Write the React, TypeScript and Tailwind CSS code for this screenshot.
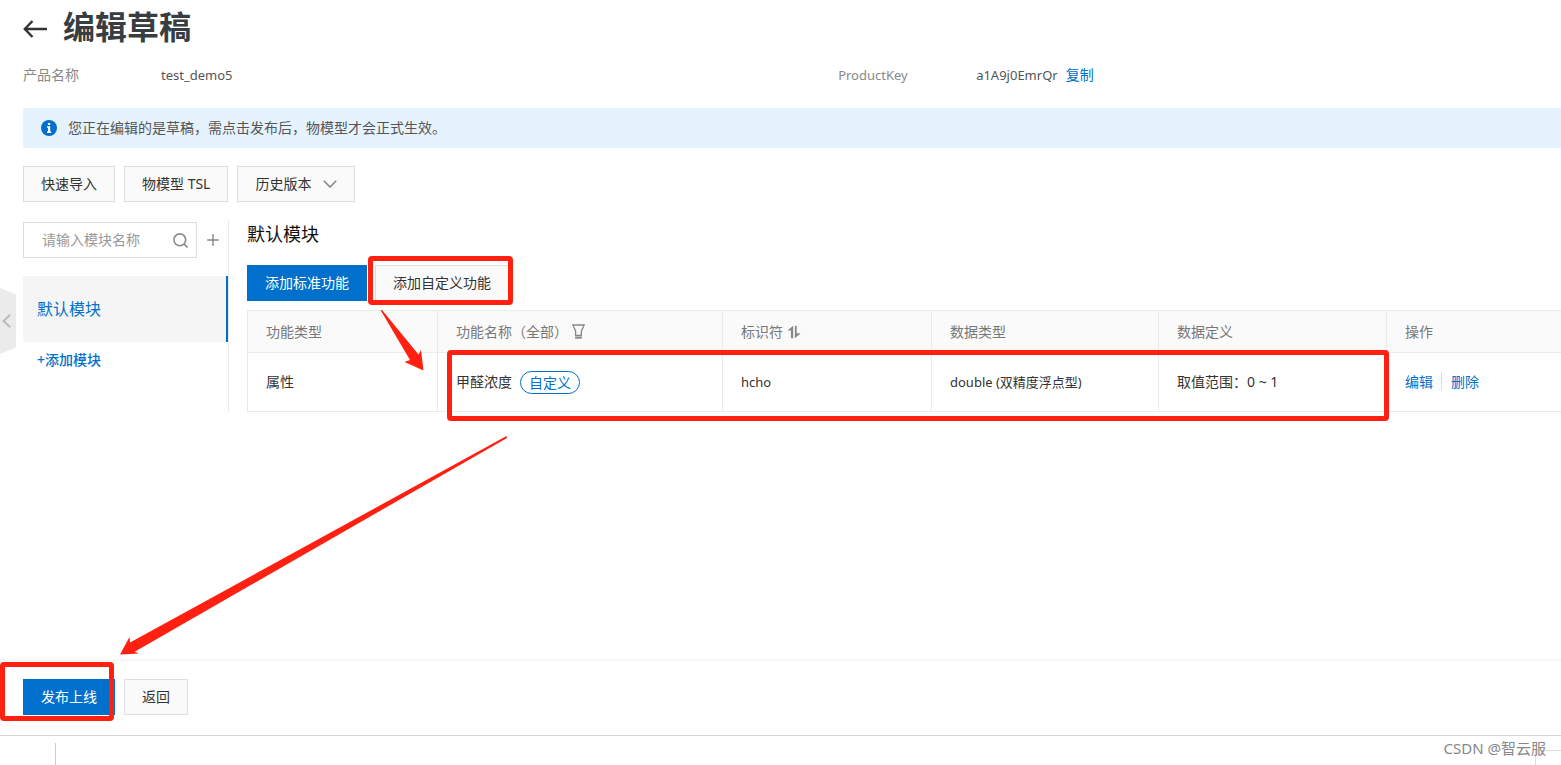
import { Plus } from "lucide-react";

const COLUMNS = [
  { label: "功能类型", width: "w-[190px]" },
  { label: "功能名称（全部）", width: "w-[285px]", icon: "filter" },
  { label: "标识符", width: "w-[209px]", icon: "sort" },
  { label: "数据类型", width: "w-[227px]" },
  { label: "数据定义", width: "w-[228px]" },
  { label: "操作", width: "" },
];

const ROWS = [
  {
    type: "属性",
    name: "甲醛浓度",
    tag: "自定义",
    identifier: "hcho",
    dataType: "double (双精度浮点型)",
    definition: "取值范围：0 ~ 1",
  },
];

const BTN = "h-9 border border-[#dedede] bg-[#fafafa] px-[17px] text-[#333]";
const BTN_PRIMARY = "h-9 bg-[#0070cc] px-[18px] text-white";
const CELL = "border border-[#ebebeb] px-[18px] text-left font-normal last:border-r-0";

function BackIcon() {
  return (
    <svg className="h-[18px] w-6" viewBox="0 0 24 18" fill="none" stroke="#333" strokeWidth="2.4" aria-hidden="true">
      <path d="M9.500 1L1.800 9l7.700 8M2 9h22" />
    </svg>
  );
}

function InfoIcon() {
  return (
    <svg className="size-4" viewBox="0 0 16 16" aria-hidden="true">
      <circle cx="8" cy="8" r="8" fill="#0070cc" />
      <path d="M6.900 3h2.300v2H6.900zM6 6.300h3.200v5.200h1V13H6v-1.500h1V7.800H6z" fill="#fff" />
    </svg>
  );
}

function ChevronIcon() {
  return (
    <svg className="h-2 w-[14px]" viewBox="0 0 14 8" fill="none" stroke="#888" strokeWidth="1.6" aria-hidden="true">
      <path d="M.8.8L7 7l6.200-6.200" />
    </svg>
  );
}

function SearchIcon() {
  return (
    <svg className="size-[15px] shrink-0" viewBox="0 0 15 15" fill="none" stroke="#888" strokeWidth="1.6" aria-hidden="true">
      <circle cx="6.800" cy="6.800" r="5.900" />
      <path d="M11 11l3.500 3.500" />
    </svg>
  );
}

function FilterIcon() {
  return (
    <svg className="h-[15px] w-[13px]" viewBox="0 0 13 15" fill="none" stroke="#888" aria-hidden="true">
      <path d="M.8 1h11.400L9.400 7v4.500H3.600V7z" strokeWidth="1.300" />
      <path d="M3.200 13.700h6.600" strokeWidth="2" />
    </svg>
  );
}

function SortIcon() {
  return (
    <svg className="h-[14px] w-[14px]" viewBox="0 0 14 14" fill="#888" aria-hidden="true">
      <path d="M6.200.8v12.400H3.900V5.400H.4zM7.900.8h1.800v7.400h3.900L7.900 13.200z" />
    </svg>
  );
}

export default function App() {
  return (
    <div className="relative flex min-h-screen flex-col overflow-hidden bg-white font-['Noto_Sans','Noto_Sans_CJK_SC',sans-serif] text-sm text-[#333]">
      <main className="flex-1 pl-[23px]">
        <header className="flex h-[54px] items-center gap-4">
          <a href="#back" aria-label="返回上一页" className="pt-1">
            <BackIcon />
          </a>
          <h1 className="text-[32px] leading-[54px] font-bold text-[#373d41]">编辑草稿</h1>
        </header>

        <dl className="grid grid-cols-[53%_47%] pt-[11px] leading-5">
          <div className="flex">
            <dt className="w-[138px] text-[#888]">产品名称</dt>
            <dd className="text-[13px] text-[#555]">test_demo5</dd>
          </div>
          <div className="flex">
            <dt className="w-[138px] text-[13px] text-[#888]">ProductKey</dt>
            <dd className="flex gap-2 text-[13px] text-[#555]">
              a1A9j0EmrQr
              <button className="text-sm text-[#0070cc]">复制</button>
            </dd>
          </div>
        </dl>

        <div className="mt-[23px] flex h-10 items-center gap-[11px] bg-[#e5f3ff] pl-[18px] text-[#555]">
          <InfoIcon />
          <p>您正在编辑的是草稿，需点击发布后，物模型才会正式生效。</p>
        </div>

        <div className="mt-[18px] flex gap-[9px]">
          <button className={BTN}>快速导入</button>
          <button className={BTN}>物模型 TSL</button>
          <button className={`${BTN} flex items-center gap-3`}>
            历史版本
            <ChevronIcon />
          </button>
        </div>

        <div className="mt-[18px] flex">
          <aside className="h-48 w-[206px] shrink-0 border-r border-[#ebebeb] pt-[2px]">
            <div className="flex items-center gap-[7px]">
              <label className="flex h-9 w-[174px] items-center border border-[#dedede] pr-2 pl-[18px]">
                <input
                  className="w-full min-w-0 outline-none placeholder:text-[#999]"
                  placeholder="请输入模块名称"
                  aria-label="模块名称"
                />
                <SearchIcon />
              </label>
              <button aria-label="添加">
                <Plus className="size-[18px] text-[#888]" strokeWidth={2} />
              </button>
            </div>
            <a
              href="#default"
              className="mt-[18px] flex h-[66px] items-center border-r-2 border-[#0070cc] bg-[#f5f5f5] pl-[14px] text-base text-[#0070cc]"
            >
              默认模块
            </a>
            <button className="mt-2 ml-[14px] font-medium text-[#0070cc]">+添加模块</button>
          </aside>

          <section className="min-w-0 flex-1 pl-[18px]">
            <h2 className="text-lg leading-7 text-[#111]">默认模块</h2>
            <div className="mt-[17px] flex gap-2">
              <button className={BTN_PRIMARY}>添加标准功能</button>
              <button className={BTN}>添加自定义功能</button>
            </div>
            <table className="mt-[9px] w-full table-fixed border-collapse">
              <thead>
                <tr className="h-[42px] bg-[#fafafa] text-[#777]">
                  {COLUMNS.map((col) => (
                    <th key={col.label} className={`${CELL} ${col.width}`}>
                      <span className="flex items-center gap-1">
                        {col.label}
                        {col.icon === "filter" && <FilterIcon />}
                        {col.icon === "sort" && <SortIcon />}
                      </span>
                    </th>
                  ))}
                </tr>
              </thead>
              <tbody>
                {ROWS.map((row) => (
                  <tr key={row.identifier} className="h-[59px]">
                    <td className={CELL}>{row.type}</td>
                    <td className={CELL}>
                      <span className="flex items-center gap-2">
                        {row.name}
                        <span className="rounded-full border border-[#0070cc] px-2 leading-[21px] text-[#0070cc]">
                          {row.tag}
                        </span>
                      </span>
                    </td>
                    <td className={`${CELL} text-[13px]`}>{row.identifier}</td>
                    <td className={`${CELL} text-[13px]`}>{row.dataType}</td>
                    <td className={CELL}>{row.definition}</td>
                    <td className={`${CELL} text-[#0070cc]`}>
                      <a href="#edit" className="mr-2">编辑</a>
                      <a href="#delete" className="border-l border-[#dedede] pl-[9px]">删除</a>
                    </td>
                  </tr>
                ))}
              </tbody>
            </table>
          </section>
        </div>
      </main>

      <footer>
        <div className="flex gap-[9px] border-t-2 border-[#f7f7f7] pt-[18px] pb-5 pl-[23px]">
          <button className={BTN_PRIMARY}>发布上线</button>
          <button className={BTN}>返回</button>
        </div>
        <div className="flex h-[30px] items-end justify-between border-t border-[#d5d5d5]">
          <div className="ml-[55px] h-[22px] w-px bg-[#ccc]" />
          <div className="h-[15px] w-[26px] border-t border-l border-[#ddd]" />
        </div>
      </footer>

      {/* Collapse handle on the left edge */}
      <button
        className="absolute top-[288px] left-0 flex h-[66px] w-4 items-center bg-[#ebebeb] pl-[2px] [clip-path:polygon(0_0,100%_10%,100%_90%,0_100%)]"
        aria-label="收起"
      >
        <svg className="h-[14px] w-[9px]" viewBox="0 0 9 14" fill="none" stroke="#bbb" strokeWidth="2" aria-hidden="true">
          <path d="M8.200.8L1.500 7l6.700 6.200" />
        </svg>
      </button>

      {/* Annotations */}
      <div className="pointer-events-none absolute inset-0">
        <div className="absolute top-[256px] left-[368px] h-[49px] w-[145px] rounded border-5 border-[#ff2012]" />
        <div className="absolute top-[350px] left-[447px] h-[71px] w-[942px] rounded border-5 border-[#ff2012]" />
        <div className="absolute top-[662px] left-0 h-[59px] w-[114px] rounded border-5 border-[#ff2012]" />
        <svg className="absolute top-0 left-0 h-[765px] w-[1561px]" viewBox="0 0 1561 765" fill="#ff2012">
          <path d="M380.500 310L382 310L418.500 354.500L421 350L423.500 370.500L404.500 362L410 360z" />
          <path d="M506.500 436L507 438L134.700 651.700L139 653.500L120 654.500L129.500 637L130 642.500z" />
        </svg>
        <p className="absolute right-[15px] bottom-[6px] text-[15px] text-[#888]">CSDN @智云服</p>
      </div>
    </div>
  );
}
